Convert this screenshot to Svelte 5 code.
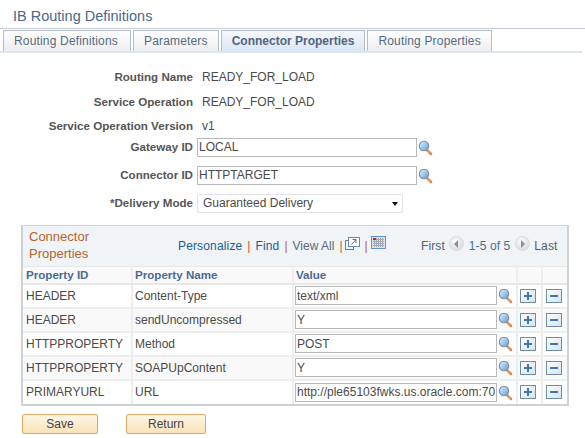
<script>
  const tabs = ["Routing Definitions", "Parameters", "Connector Properties", "Routing Properties"];
  const active = "Connector Properties";

  const info = [
    { label: "Routing Name", value: "READY_FOR_LOAD" },
    { label: "Service Operation", value: "READY_FOR_LOAD" },
    { label: "Service Operation Version", value: "v1" },
  ];

  const props = [
    { id: "HEADER", name: "Content-Type", value: "text/xml" },
    { id: "HEADER", name: "sendUncompressed", value: "Y" },
    { id: "HTTPPROPERTY", name: "Method", value: "POST" },
    { id: "HTTPPROPERTY", name: "SOAPUpContent", value: "Y" },
    { id: "PRIMARYURL", name: "URL", value: "http://ple65103fwks.us.oracle.com:7001/PSIGW/HttpListeningConnector" },
  ];
</script>

{#snippet lens()}
  <svg class="lens" width="15" height="16" viewBox="0 0 15 16">
    <defs>
      <linearGradient id="glass" x1="0" y1="0" x2="1" y2="1">
        <stop offset="0" stop-color="#e4f1fc" />
        <stop offset="0.6" stop-color="#8fc0ec" />
        <stop offset="1" stop-color="#5f9ad6" />
      </linearGradient>
    </defs>
    <path d="M9 10 L13 14" stroke="#e0935a" stroke-width="2.6" stroke-linecap="round" />
    <path d="M13.6 13.2 L12.4 14.6" stroke="#8a8f96" stroke-width="1" />
    <circle cx="6" cy="6" r="4.7" fill="url(#glass)" stroke="#7d8b99" stroke-width="1.1" />
  </svg>
{/snippet}

<div class="page">
  <h1>IB Routing Definitions</h1>

  <div class="tabs">
    {#each tabs as tab}
      <div class="tab" class:active={tab === active}>{tab}</div>
    {/each}
  </div>

  <div class="form">
    {#each info as row}
      <div class="info">
        <span class="label">{row.label}</span>
        <span class="val">{row.value}</span>
      </div>
    {/each}

    <div class="field first">
      <span class="label">Gateway ID</span>
      <input type="text" value="LOCAL" />
      {@render lens()}
    </div>
    <div class="field">
      <span class="label">Connector ID</span>
      <input type="text" value="HTTPTARGET" />
      {@render lens()}
    </div>
    <div class="field">
      <span class="label">*Delivery Mode</span>
      <div class="select">
        <select>
          <option>Guaranteed Delivery</option>
        </select>
        <span class="caret"></span>
      </div>
    </div>
  </div>

  <div class="grid">
    <div class="grid-head">
      <div class="grid-title">Connector<br />Properties</div>
      <div class="links">
        <span class="link">Personalize</span>
        <span class="sep">|</span>
        <span class="link">Find</span>
        <span class="sep">|</span>
        <span class="plain">View All</span>
        <span class="sep">|</span>
        <svg class="popup" width="15" height="13" viewBox="0 0 15 13">
          <rect x="0.5" y="3.5" width="8" height="9" fill="#eef3f7" stroke="#6d7c8c" />
          <rect x="3.5" y="0.5" width="11" height="9" fill="#fff" stroke="#5f8db8" />
          <path d="M6.5 7.5 L10.5 3 M7.5 2.5 H11 V6" fill="none" stroke="#4f6f8f" />
        </svg>
        <span class="sep">|</span>
        <svg class="cal" width="15" height="13" viewBox="0 0 15 13">
          <rect x="0.5" y="0.5" width="14" height="12" fill="#dfe3e8" stroke="#5c93d0" />
          <path d="M2 3.5 H13 M2 5.5 H13 M2 7.5 H13 M2 9.5 H13 M3.5 2 V11 M5.5 2 V11 M7.5 2 V11 M9.5 2 V11 M11.5 2 V11" stroke="#a4abb3" />
          <rect x="2" y="2" width="3" height="2" fill="#e0141c" />
        </svg>
      </div>
      <div class="pager">
        <span>First</span>
        <span class="nav"><span class="tri left"></span></span>
        <span class="count">1-5 of 5</span>
        <span class="nav"><span class="tri right"></span></span>
        <span>Last</span>
      </div>
    </div>

    <table>
      <colgroup>
        <col style="width:109px" />
        <col style="width:161px" />
        <col style="width:224px" />
        <col style="width:25px" />
        <col style="width:25px" />
      </colgroup>
      <thead>
        <tr>
          <th>Property ID</th>
          <th>Property Name</th>
          <th>Value</th>
          <th></th>
          <th></th>
        </tr>
      </thead>
      <tbody>
        {#each props as p, i}
          <tr class:alt={i % 2 === 1}>
            <td>{p.id}</td>
            <td>{p.name}</td>
            <td>
              <div class="value-cell">
                <input type="text" value={p.value} />
                {@render lens()}
              </div>
            </td>
            <td class="act">
              <span class="square"><span class="bar"></span><span class="bar v"></span></span>
            </td>
            <td class="act">
              <span class="square"><span class="bar"></span></span>
            </td>
          </tr>
        {/each}
      </tbody>
    </table>
  </div>

  <div class="buttons">
    <button class="save">Save</button>
    <button class="ret">Return</button>
  </div>
</div>

<style>
  :global(body) {
    margin: 0;
    background: #fff;
  }

  .page {
    width: 585px;
    height: 438px;
    overflow: hidden;
    font-family: "Liberation Sans", Arial, sans-serif;
    font-size: 12px;
    color: #4a4a4a;
  }

  h1 {
    margin: 0;
    height: 28px;
    line-height: 32px;
    padding-left: 13px;
    font-size: 14.5px;
    font-weight: normal;
    color: #48688f;
    border-bottom: 1px solid #c6ccd8;
    box-sizing: content-box;
  }

  .tabs {
    display: flex;
    gap: 2px;
    width: 582px;
    margin-top: 1px;
    padding-left: 3px;
    box-sizing: border-box;
    border-bottom: 2px solid #dce6f3;
  }

  .tab {
    height: 21px;
    line-height: 21px;
    padding: 0 10px;
    box-sizing: border-box;
    border: 1px solid #b3bccb;
    border-bottom: none;
    background: linear-gradient(#fff, #eeeeee);
    color: #566a80;
    letter-spacing: 0.17px;
  }

  .tab:first-child {
    padding-right: 12px;
  }

  .tab.active {
    font-weight: bold;
    color: #4f6680;
    background: linear-gradient(#f5f8fb, #dbe6f4);
    letter-spacing: 0;
  }

  .form {
    margin-top: 14px;
    display: flex;
    flex-direction: column;
  }

  .label {
    width: 193px;
    text-align: right;
    font-size: 11.6px;
    font-weight: bold;
    color: #555;
    flex: none;
  }

  .info {
    display: flex;
    align-items: baseline;
    height: 24.5px;
    line-height: 19px;
  }

  .val {
    margin-left: 9px;
  }

  .field {
    display: flex;
    align-items: center;
    height: 19px;
    margin-bottom: 9px;
  }

  .field .label {
    margin-top: -2px;
  }

  .field.first {
    margin-top: -3px;
  }

  input {
    height: 19px;
    padding: 0 1px;
    border: 1px solid #b8b8b8;
    box-sizing: border-box;
    font: 12px "Liberation Sans", Arial, sans-serif;
    color: #4a4a4a;
    background: #fff;
    outline: none;
  }

  .field input {
    width: 220px;
    margin-left: 4px;
  }

  .lens {
    flex: none;
    margin-left: 1px;
    margin-top: 1px;
  }

  .select {
    position: relative;
    margin-left: 4px;
    width: 206px;
    height: 19px;
  }

  select {
    appearance: none;
    width: 100%;
    height: 100%;
    padding: 0 0 0 5px;
    border: 1px solid #dfe3e8;
    border-radius: 2px;
    background: #fff;
    font: 12px "Liberation Sans", Arial, sans-serif;
    color: #4a4a4a;
    outline: none;
  }

  .caret {
    position: absolute;
    right: 5px;
    top: 8px;
    border-left: 3.5px solid transparent;
    border-right: 3.5px solid transparent;
    border-top: 4px solid #111;
  }

  .grid {
    margin: 3px 0 0 21px;
    width: 548px;
    box-sizing: border-box;
    border: 1px solid #cdd2d8;
    border-width: 1px 2px 2px 2px;
    background: #fff;
  }

  .grid-head {
    display: flex;
    align-items: center;
    height: 40px;
    background: #f0f4f6;
  }

  .grid-title {
    width: 155px;
    padding-left: 6px;
    margin-top: -2px;
    box-sizing: border-box;
    font-size: 13px;
    line-height: 17px;
    color: #b4622e;
    flex: none;
  }

  .links {
    display: flex;
    align-items: center;
    gap: 4px;
    width: 243px;
    flex: none;
  }

  .link {
    color: #1f5a96;
    letter-spacing: 0.15px;
  }

  .plain {
    color: #5a6b7c;
  }

  .sep {
    color: #b4622e;
    margin: 0 1px;
  }

  .popup {
    margin: -5px 0 0 -3px;
  }

  .cal {
    margin: -7px 0 0 -2px;
  }

  .pager {
    display: flex;
    align-items: center;
    gap: 4px;
    color: #4f5f70;
    letter-spacing: 0.1px;
  }

  .count {
    color: #48708f;
    margin: 0 1px;
  }

  .nav {
    width: 15px;
    height: 15px;
    border-radius: 50%;
    background: radial-gradient(circle at 40% 35%, #fbfbfb, #cfd3d6);
    border: 1px solid #d8dbde;
    box-sizing: border-box;
    display: flex;
    align-items: center;
    justify-content: center;
    margin-top: -4px;
  }

  .tri {
    border-top: 4px solid transparent;
    border-bottom: 4px solid transparent;
  }

  .tri.left {
    border-right: 4px solid #8a8f94;
  }

  .tri.right {
    border-left: 4px solid #8a8f94;
  }

  table {
    width: 544px;
    table-layout: fixed;
    border-collapse: collapse;
  }

  th {
    height: 16px;
    padding: 0 2px;
    background: #f9f9f9;
    color: #4a6a96;
    text-align: left;
    font-size: 11.6px;
    border-left: 2px solid #eeeeee;
    border-top: 1px solid #e6e8ea;
    border-bottom: 2px solid #e8e8e8;
    box-sizing: content-box;
  }

  th:first-child,
  td:first-child {
    border-left: none;
    padding-left: 3px;
  }

  td {
    height: 22px;
    padding: 0 2px;
    border-left: 2px solid #eeeeee;
    border-bottom: 2px solid #eeeeee;
    white-space: nowrap;
    overflow: hidden;
  }

  tr.alt td {
    background: #f9f9f9;
  }

  tr:last-child td {
    border-bottom: none;
    height: 23px;
  }

  .value-cell {
    display: flex;
    align-items: center;
  }

  .value-cell input {
    width: 202px;
    flex: none;
    margin-left: -1px;
  }

  td.act {
    padding: 0 3px 0 0;
    text-align: center;
  }

  .square {
    display: inline-block;
    position: relative;
    vertical-align: middle;
    width: 16px;
    height: 14px;
    border: 1px solid #6f8ea3;
    box-sizing: border-box;
    background: linear-gradient(135deg, #ffffff, #d5e3ea);
  }

  .bar {
    position: absolute;
    left: 3px;
    right: 3px;
    top: 5px;
    height: 2px;
    background: #3c78b6;
  }

  .bar.v {
    left: 6px;
    right: 6px;
    width: 2px;
    top: 2px;
    height: 8px;
  }

  .buttons {
    display: flex;
    margin: 8px 0 0 22px;
  }

  button {
    height: 20px;
    padding: 0;
    border: 1px solid #dca868;
    border-radius: 2px;
    background: linear-gradient(#fdf6e6, #fbe3b8);
    font: 12px "Liberation Sans", Arial, sans-serif;
    color: #444;
  }

  .save {
    width: 76px;
    margin-right: 28px;
  }

  .ret {
    width: 80px;
  }
</style>
